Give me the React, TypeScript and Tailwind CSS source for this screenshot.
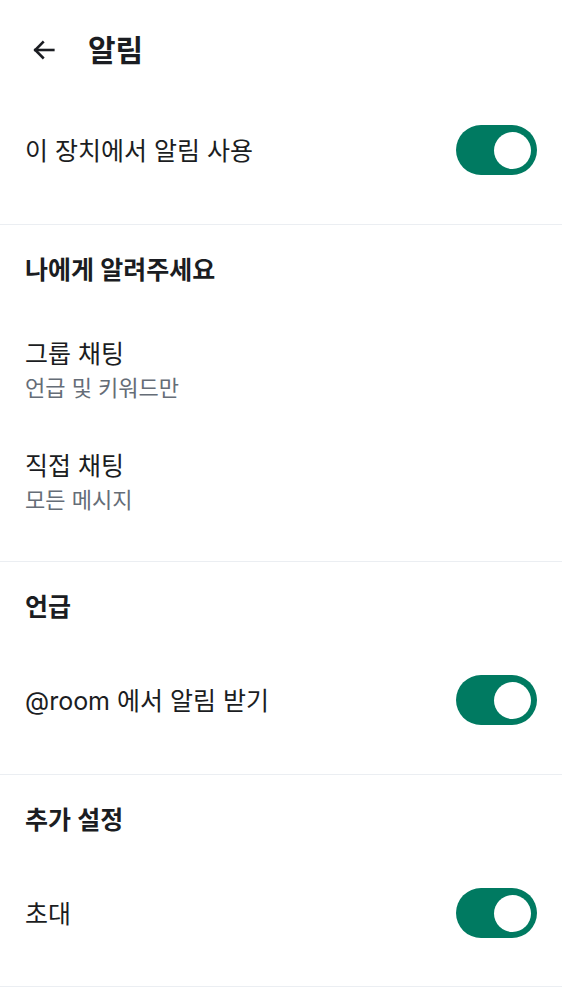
import { useState } from 'react'

const font = { fontFamily: "Inter, 'Noto Sans CJK KR', sans-serif" }

function Toggle({ on, onChange }: { on: boolean; onChange: () => void }) {
  return (
    <button
      type="button"
      onClick={onChange}
      className={`flex items-center w-[81px] h-[50px] rounded-full px-[6px] shrink-0 ${
        on ? 'bg-[#007a61] justify-end' : 'bg-[#d7dbe0] justify-start'
      }`}
    >
      <span className="block w-[37px] h-[37px] rounded-full bg-white" />
    </button>
  )
}

function SwitchRow({ label, on, onChange }: { label: string; on: boolean; onChange: () => void }) {
  return (
    <div className="h-[100px] flex items-center justify-between pl-[25px] pr-[25px]">
      <span className="text-[25px] pt-[3px] text-[#1b1d22]">{label}</span>
      <Toggle on={on} onChange={onChange} />
    </div>
  )
}

function SectionTitle({ children }: { children: string }) {
  return (
    <div className="h-[88px] flex items-center px-[25px] pt-[3px]">
      <span className="text-[25px] font-semibold text-[#1b1d22]">{children}</span>
    </div>
  )
}

function Divider() {
  return <div className="h-px bg-[#ebeef2]" />
}

export default function App() {
  const [device, setDevice] = useState(true)
  const [room, setRoom] = useState(true)
  const [invite, setInvite] = useState(true)

  return (
    <div className="min-h-screen bg-white" style={font}>
      {/* Top bar */}
      <div className="h-[100px] flex items-center pl-[27px] gap-[27px]">
        <button type="button" className="w-[34px] h-[34px] flex items-center justify-center text-[#1b1d22]">
          <svg width="28" height="28" viewBox="0 0 24 24" fill="none" stroke="currentColor" strokeWidth="2.2" strokeLinecap="square">
            <path d="M20 12H4.5" />
            <path d="M11 5.5L4.5 12l6.5 6.5" />
          </svg>
        </button>
        <h1 className="text-[30px] font-bold text-[#1b1d22]">알림</h1>
      </div>

      <SwitchRow label="이 장치에서 알림 사용" on={device} onChange={() => setDevice(!device)} />
      <div className="h-[24px]" />
      <Divider />

      <SectionTitle>나에게 알려주세요</SectionTitle>
      {[
        { title: '그룹 채팅', desc: '언급 및 키워드만' },
        { title: '직접 채팅', desc: '모든 메시지' },
      ].map((item) => (
        <div key={item.title} className="h-[112px] flex flex-col justify-center px-[25px] pt-[3px]">
          <span className="text-[25px] leading-[34px] text-[#1b1d22]">{item.title}</span>
          <span className="text-[22px] leading-[34px] text-[#656d77]">{item.desc}</span>
        </div>
      ))}
      <div className="h-[24px]" />
      <Divider />

      <SectionTitle>언급</SectionTitle>
      <SwitchRow label="@room 에서 알림 받기" on={room} onChange={() => setRoom(!room)} />
      <div className="h-[24px]" />
      <Divider />

      <SectionTitle>추가 설정</SectionTitle>
      <SwitchRow label="초대" on={invite} onChange={() => setInvite(!invite)} />
      <div className="h-[23px]" />
      <Divider />
    </div>
  )
}
